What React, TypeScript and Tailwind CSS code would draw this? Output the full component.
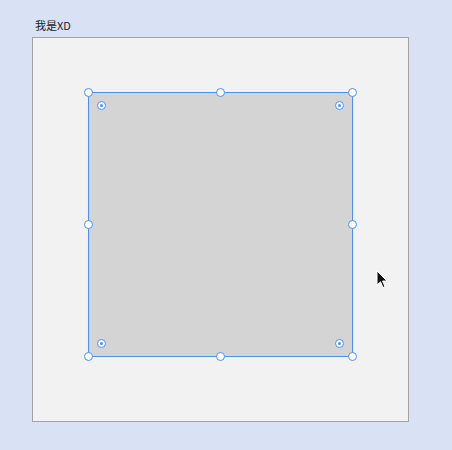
import React from "react";

const Handle = ({ cls }: { cls: string }) => (
  <div className={`absolute w-[9px] h-[9px] rounded-full bg-white border border-[#4a90f0] ${cls}`} />
);

const Radius = ({ cls }: { cls: string }) => (
  <div className={`absolute w-[9px] h-[9px] rounded-full bg-white border border-[#4a90f0] flex items-center justify-center ${cls}`}>
    <div className="w-[3px] h-[3px] rounded-full bg-[#4a90f0]" />
  </div>
);

export default function App() {
  return (
    <div className="w-[452px] h-[450px] bg-[#d9e1f5] pt-[17px] pl-[32px] relative overflow-hidden" style={{ fontFamily: '"Noto Sans CJK SC", "Noto Sans", sans-serif' }}>
      <div className="text-[11px] leading-[16px] text-[#222] pl-[3px] h-[20px]">我是XD</div>
      <div className="w-[377px] h-[385px] bg-[#f2f2f2] border border-[#a3a3a3] pt-[54px] pl-[55px]">
        <div className="relative w-[265px] h-[265px] bg-[#d4d4d4] border border-[#4a90f0]">
          <Handle cls="-left-[5px] -top-[5px]" />
          <Handle cls="left-[127px] -top-[5px]" />
          <Handle cls="-right-[5px] -top-[5px]" />
          <Handle cls="-left-[5px] top-[127px]" />
          <Handle cls="-right-[5px] top-[127px]" />
          <Handle cls="-left-[5px] -bottom-[5px]" />
          <Handle cls="left-[127px] -bottom-[5px]" />
          <Handle cls="-right-[5px] -bottom-[5px]" />
          <Radius cls="left-[8px] top-[8px]" />
          <Radius cls="right-[8px] top-[8px]" />
          <Radius cls="left-[8px] bottom-[8px]" />
          <Radius cls="right-[8px] bottom-[8px]" />
        </div>
      </div>
      <svg className="absolute left-[376px] top-[270px]" width="12" height="20" viewBox="0 0 12 20">
        <path d="M1 1 L1 15 L4.5 11.8 L7 17.5 L9 16.6 L6.6 11 L11 11 Z" fill="#111" stroke="#fff" strokeWidth="1" strokeLinejoin="round" />
      </svg>
    </div>
  );
}
